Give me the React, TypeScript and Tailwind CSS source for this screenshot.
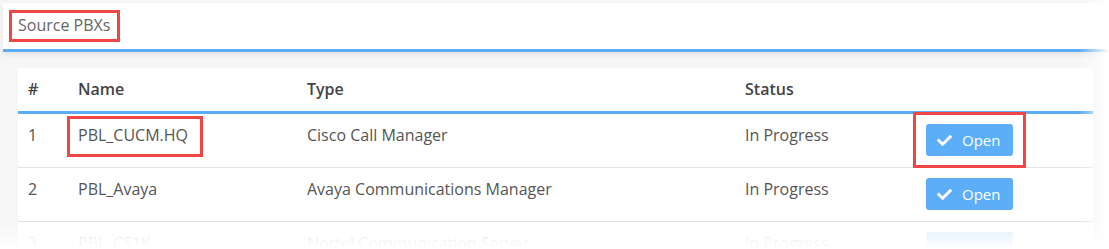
import { FaCheck } from 'react-icons/fa';

const rows = [
  { id: 1, name: 'PBL_CUCM.HQ', type: 'Cisco Call Manager', status: 'In Progress' },
  { id: 2, name: 'PBL_Avaya', type: 'Avaya Communications Manager', status: 'In Progress' },
  { id: 3, name: 'PBL_CS1K', type: 'Nortel Communication Server', status: 'In Progress' },
];

const cols = 'grid grid-cols-[50px_229px_438px_181px_1fr] pl-[10px]';

const App = () => {
  return (
    <div
      className="relative w-[1109px] h-[249px] overflow-hidden bg-[#f6f6f6] text-[16px] text-[#555]"
      style={{ fontFamily: '"Open Sans", "Liberation Sans", sans-serif' }}
    >
      {/* Top bar */}
      <div className="ml-[3px] mt-[3px] bg-white border-b-[3px] border-[#5aacf4] shadow-[0_3px_6px_rgba(0,0,0,0.08)]">
        <div className="h-[46px] pl-[15px] pt-[11px] leading-[22px] text-[#666]">Source PBXs</div>
      </div>

      {/* Table card */}
      <div className="ml-[18px] mr-[16px] mt-[16px] bg-white">
        <div className={`${cols} h-[46px] pt-[10px] leading-[22px] font-semibold text-[#444] border-b-[3px] border-[#5aacf4]`}>
          <div>#</div>
          <div>Name</div>
          <div>Type</div>
          <div>Status</div>
          <div />
        </div>
        {rows.map((row, index) => (
          <div
            key={row.id}
            className={`${cols} h-[54px] pt-[10px] leading-[22px] border-b border-[#e2e2e2] ${index === 2 ? 'opacity-20' : ''}`}
          >
            <div>{row.id}</div>
            <div>{row.name}</div>
            <div>{row.type}</div>
            <div>{row.status}</div>
            <div>
              <button className="flex items-center gap-[10px] w-[87px] h-[32px] pl-[11px] rounded-[3px] bg-[#5caef8] text-white text-[15px]">
                <FaCheck className="w-[15px] h-[15px]" />
                <span>Open</span>
              </button>
            </div>
          </div>
        ))}
      </div>

      {/* Fades at the screenshot's edges */}
      <div className="absolute top-0 right-0 w-[30px] h-full bg-gradient-to-r from-transparent to-white" />
      <div className="absolute left-0 bottom-0 w-full h-[26px] bg-gradient-to-b from-transparent to-white" />

      {/* Highlight boxes */}
      <div className="absolute left-[9px] top-[10px] w-[111px] h-[32px] border-[3px] border-[#f04646]" />
      <div className="absolute left-[67px] top-[116px] w-[136px] h-[41px] border-[3px] border-[#f04646]" />
      <div className="absolute left-[913px] top-[112px] w-[113px] h-[56px] border-[3px] border-[#f04646]" />
    </div>
  );
};

export default App;
